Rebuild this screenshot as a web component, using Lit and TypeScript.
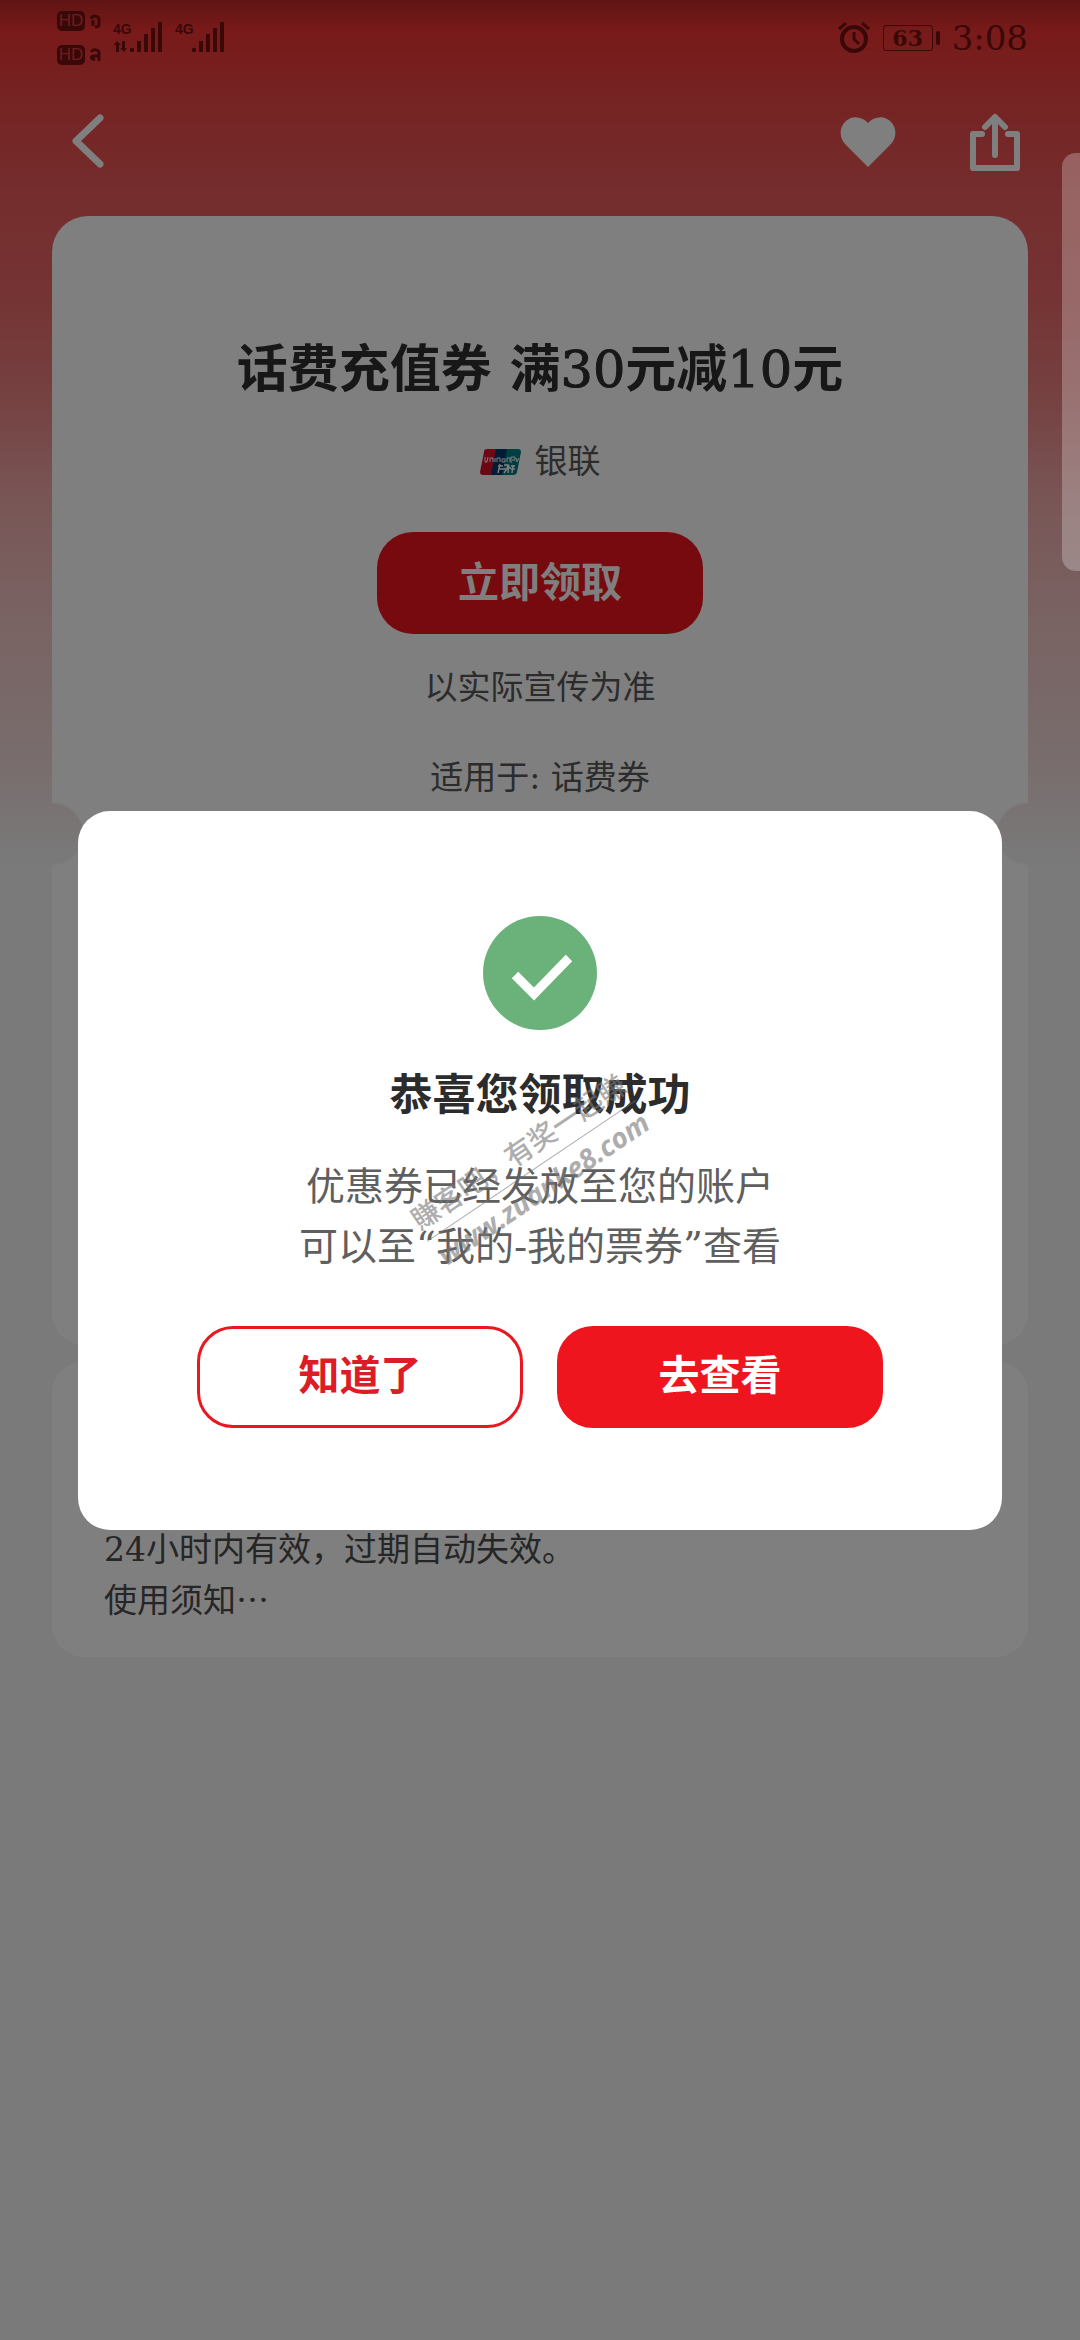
import { LitElement, html, css, svg } from "lit";
import { customElement, property } from "lit/decorators.js";

@customElement("status-bar")
class StatusBar extends LitElement {
  static styles = css`
    :host {
      display: flex;
      justify-content: space-between;
      align-items: center;
      height: 76px;
      padding: 0 52px 0 57px;
      color: #74100f;
      font-family: "DejaVu Serif", "Liberation Serif", serif;
    }
    .group {
      display: flex;
      align-items: center;
    }
    .left {
      gap: 12px;
    }
    .right {
      gap: 12px;
    }
    .calls {
      display: grid;
      gap: 14px;
    }
    .call {
      display: flex;
      align-items: center;
      gap: 5px;
    }
    .hd {
      width: 28px;
      height: 20px;
      border-radius: 5px;
      background: currentColor;
      text-align: center;
      font: 400 17px/20px "Liberation Sans", sans-serif;
    }
    .hd span {
      color: #dc3a3a;
    }
    .battery {
      display: flex;
      align-items: center;
      gap: 3px;
    }
    .cell {
      width: 48px;
      height: 24px;
      border: 1px solid currentColor;
      border-radius: 3px;
      text-align: center;
      font: 700 22px/24px "DejaVu Serif", serif;
    }
    .nub {
      width: 4px;
      height: 14px;
      border-radius: 2px;
      background: currentColor;
    }
    .time {
      font-size: 34px;
      line-height: 40px;
    }
    svg {
      display: block;
    }
    .net {
      font: 700 14px "Liberation Sans", sans-serif;
    }
  `;

  private signal(data: boolean) {
    return html`<svg width="50" height="34" viewBox="0 0 50 34" fill="currentColor" aria-hidden="true">
      <text class="net" x="0" y="13">4G</text>
      ${data
        ? svg`<path d="M4 20l4 4H6v7H3v-7H1zM11 31l-4-4h2v-7h3v7h2z" />`
        : null}
      <rect x="17" y="27" width="4" height="4" rx="1" />
      <rect x="24" y="20" width="4" height="11" />
      <rect x="31" y="13" width="4" height="18" />
      <rect x="38" y="7" width="4" height="24" />
      <rect x="45" y="1" width="4" height="30" />
    </svg>`;
  }

  render() {
    return html`
      <div class="group left">
        <div class="calls">
          <div class="call">
            <div class="hd"><span>HD</span></div>
            <svg width="11" height="15" viewBox="0 0 11 15" fill="none" stroke="currentColor" stroke-width="3" aria-hidden="true">
              <path d="M1 5c1-4 8-4 8 1v4c0 3-2 3-4 3M3 6v6" />
            </svg>
          </div>
          <div class="call">
            <div class="hd"><span>HD</span></div>
            <svg width="11" height="15" viewBox="0 0 11 15" fill="none" stroke="currentColor" stroke-width="3" aria-hidden="true">
              <path d="M1 4c2-3 8-3 8 1v8M8 8H4c-4 0-3 4 1 3" />
            </svg>
          </div>
        </div>
        <div class="group left">${this.signal(true)}${this.signal(false)}</div>
      </div>
      <div class="group right">
        <svg width="34" height="34" viewBox="0 0 34 34" fill="none" stroke="currentColor" aria-hidden="true">
          <circle cx="17" cy="18" r="12" stroke-width="4" />
          <path d="M17 11v7l5 5" stroke-width="3" />
          <path d="M2 8l7-6M32 8l-7-6" stroke-width="3" />
        </svg>
        <div class="battery">
          <div class="cell">63</div>
          <div class="nub"></div>
        </div>
        <div class="time">3:08</div>
      </div>
    `;
  }
}

@customElement("claim-dialog")
class ClaimDialog extends LitElement {
  @property() heading = "";
  @property({ attribute: false }) lines: string[] = [];

  static styles = css`
    :host {
      position: relative;
      display: flex;
      flex-direction: column;
      align-items: center;
      box-sizing: border-box;
      width: 100%;
      padding: 105px 78px 102px;
      border-radius: 32px;
      background: #fff;
    }
    .tick {
      display: block;
    }
    h2 {
      margin: 34px 0 0;
      color: #2c2c2c;
      font-size: 43px;
      line-height: 62px;
      font-weight: 700;
    }
    p {
      margin: 31px 0 0;
      color: #5f5f5f;
      font-size: 39px;
      line-height: 60px;
      text-align: center;
    }
    .line {
      display: block;
    }
    .actions {
      display: flex;
      gap: 34px;
      align-self: stretch;
      margin-top: 49px;
      padding: 0 41px;
    }
    button {
      flex: 1;
      height: 102px;
      padding: 0 0 10px;
      border: 3px solid #ea1620;
      border-radius: 36px;
      font: inherit;
      font-size: 41px;
      font-weight: 700;
    }
    .plain {
      background: #fff;
      color: #dc1c26;
    }
    .solid {
      background: #ee151e;
      border-color: #ee151e;
      color: #fff;
    }
    .mark {
      position: absolute;
      left: 49%;
      top: 50%;
      transform: translate(-50%, -50%) rotate(-34deg);
      color: #777;
      opacity: 0.6;
      text-align: center;
      white-space: nowrap;
      pointer-events: none;
    }
    .slogan {
      border-bottom: 1px solid currentColor;
      font-size: 28px;
      line-height: 42px;
      font-weight: 500;
    }
    .site {
      font: italic 700 28px/40px "Open Sans", sans-serif;
    }
  `;

  render() {
    return html`
      <svg class="tick" width="114" height="114" viewBox="0 0 114 114" aria-hidden="true">
        <circle cx="57" cy="57" r="57" fill="#6ab27a" />
        <path d="M32 59l19 19 35-36" fill="none" stroke="#fff" stroke-width="9" />
      </svg>
      <h2>${this.heading}</h2>
      <p>${this.lines.map((line) => html`<span class="line">${line}</span>`)}</p>
      <div class="actions">
        <button class="plain" type="button">知道了</button>
        <button class="solid" type="button">去查看</button>
      </div>
      <div class="mark">
        <div class="slogan">賺客吧，有奖一起賺</div>
        <div class="site">www.zuanke8.com</div>
      </div>
    `;
  }
}

@customElement("app-root")
class AppRoot extends LitElement {
  static styles = css`
    :host {
      display: block;
      position: relative;
      box-sizing: border-box;
      min-height: 100vh;
      background: linear-gradient(
          #be2a28 0,
          #f03432 30px,
          #ec4444 90px,
          #ea5a5a 190px,
          #ea6868 300px,
          #ec8484 400px,
          #f2acac 500px,
          #f4c6c6 620px,
          #f2dada 760px,
          #f4f4f4 865px
        )
        #f4f4f4;
      color: #585858;
      font-family: "DejaVu Serif", "Noto Sans CJK SC", sans-serif;
      font-size: 33px;
    }
    nav {
      display: flex;
      align-items: center;
      gap: 74px;
      height: 132px;
      padding: 0 60px 0 70px;
    }
    .icon {
      display: block;
      padding: 0;
      border: 0;
      background: none;
      color: #fff;
    }
    .icon svg {
      display: block;
    }
    .back {
      margin-right: auto;
    }
    main {
      padding: 8px 52px 0;
    }
    .coupon {
      display: flex;
      flex-direction: column;
      align-items: center;
      padding-top: 117px;
      border-radius: 36px 36px 0 0;
      background: #fff;
    }
    h1 {
      margin: 0;
      color: #2f2f2f;
      font-size: 51px;
      line-height: 72px;
      font-weight: 700;
    }
    .num {
      font-weight: 400;
      -webkit-text-stroke: 1px currentColor;
    }
    .issuer {
      display: flex;
      align-items: center;
      gap: 14px;
      margin-top: 32px;
      line-height: 48px;
    }
    .claim {
      width: 326px;
      height: 102px;
      margin: 46px 0 30px;
      padding: 0 0 8px;
      border: 0;
      border-radius: 36px;
      background: #ee151e;
      color: #fff;
      font: inherit;
      font-size: 41px;
      font-weight: 700;
    }
    .note {
      margin: 0;
      line-height: 48px;
    }
    .scope {
      margin: 42px 0 0;
      line-height: 48px;
    }
    .notches {
      height: 64px;
      background: radial-gradient(circle at 0 50%, transparent 30px, #fff 32px) left / 50% 100% no-repeat,
        radial-gradient(circle at 100% 50%, transparent 30px, #fff 32px) right / 50% 100% no-repeat;
    }
    .stub {
      height: 479px;
      border-radius: 0 0 32px 32px;
      background: #fff;
    }
    .rules {
      margin-top: 16px;
      padding: 163px 52px 31px;
      border-radius: 32px;
      background: #fff;
      color: #4c4c4c;
      line-height: 51px;
    }
    .rules p {
      margin: 0;
    }
    .scrim {
      position: absolute;
      inset: 0;
      display: flex;
      align-items: center;
      justify-content: center;
      padding: 0 78px;
      background: rgba(0, 0, 0, 0.5);
    }
    .edge {
      position: absolute;
      right: 0;
      top: 153px;
      width: 18px;
      height: 418px;
      border-radius: 14px 0 0 14px;
      background: rgba(255, 255, 255, 0.26);
    }
  `;

  render() {
    return html`
      <status-bar></status-bar>
      <nav>
        <button class="icon back" type="button" aria-label="返回">
          <svg width="36" height="60" viewBox="0 0 36 60" fill="none" stroke="currentColor" stroke-width="7" stroke-linecap="round" stroke-linejoin="round">
            <path d="M30 6L6 29l24 23" />
          </svg>
        </button>
        <button class="icon" type="button" aria-label="收藏">
          <svg width="56" height="52" viewBox="0 0 56 52" fill="currentColor">
            <path d="M28 51L6 29C-1 22-1 12 5 6c6-7 17-6 23 1 6-7 17-8 23-1 6 6 6 16-1 23z" />
          </svg>
        </button>
        <button class="icon" type="button" aria-label="分享">
          <svg width="50" height="58" viewBox="0 0 50 58" fill="none" stroke="currentColor" stroke-width="6" stroke-linecap="round" stroke-linejoin="round">
            <path d="M12 21H3v34h44V21h-9M25 42V5M15 14L25 4l10 10" />
          </svg>
        </button>
      </nav>
      <main>
        <section class="coupon">
          <h1>话费充值券 满<span class="num">30</span>元减<span class="num">10</span>元</h1>
          <div class="issuer">
            <svg width="41" height="26" viewBox="0 0 41 26" aria-hidden="true">
              <path d="M7 0h10l-5 26H3c-2 0-3-1-3-3L4 3c0-2 1-3 3-3z" fill="#d8102c" />
              <path d="M16 0h12l-5 26H11z" fill="#06386c" />
              <path d="M27 0h11c2 0 3 1 3 3l-4 20c0 2-2 3-4 3H22z" fill="#007c84" />
              <path d="M5 8v4q0 2 2 1l1-5M10 13V9h3v4M15 9v4M17 13V9h3v4M22 13v-3h3v3zM27 13V9h3v4M31 14V8h4v3h-3M36 9l1 4 2-4" fill="none" stroke="#fff" stroke-width="1" />
              <path d="M18 17h5M20 15l-2 9M19 20h4M24 16h4l-1 4h-4M24 24l3-4M29 16l-1 8M28 19h3M33 16l-1 8M31 17h4M31 20h4" fill="none" stroke="#fff" stroke-width="1.4" />
            </svg>
            <span>银联</span>
          </div>
          <button class="claim" type="button">立即领取</button>
          <p class="note">以实际宣传为准</p>
          <p class="scope">适用于: 话费券</p>
        </section>
        <div class="notches"></div>
        <div class="stub"></div>
        <section class="rules">
          <p>24小时内有效，过期自动失效。</p>
          <p>使用须知⋯</p>
        </section>
      </main>
      <div class="scrim">
        <claim-dialog
          role="dialog"
          aria-modal="true"
          .heading=${"恭喜您领取成功"}
          .lines=${["优惠券已经发放至您的账户", "可以至“我的-我的票券”查看"]}
        ></claim-dialog>
      </div>
      <div class="edge"></div>
    `;
  }
}
